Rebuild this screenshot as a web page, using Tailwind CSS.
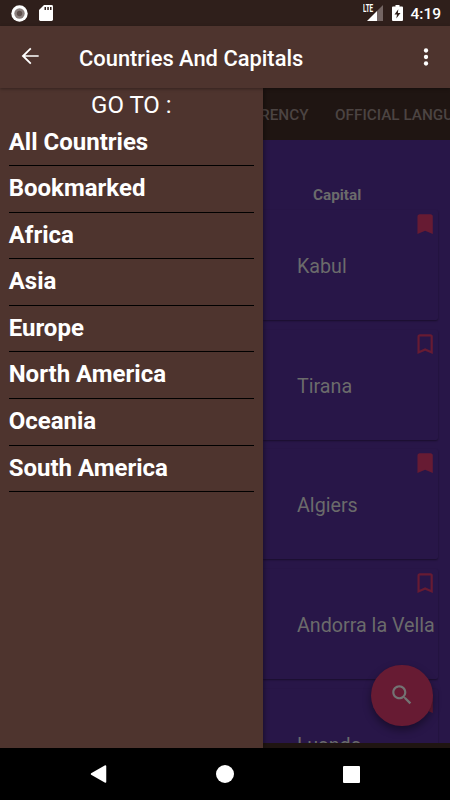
<!DOCTYPE html>
<html lang="en">
<head>
<meta charset="utf-8">
<title>Countries And Capitals</title>
<script src="https://cdn.jsdelivr.net/npm/@tailwindcss/browser@4"></script>
</head>
<body class="bg-black">
<div class="relative flex h-[800px] w-[450px] flex-col overflow-hidden bg-black font-[Roboto,sans-serif] text-white">
  <!-- Status bar -->
  <div class="flex h-[26px] shrink-0 items-center bg-[#2f1f1b] pr-[9px] pl-[11px]">
    <svg class="size-[17px]" viewBox="0 0 17 17"><circle cx="8.5" cy="8.5" r="8.2" fill="#fff"/><circle cx="8.5" cy="8.5" r="5.2" fill="#8b807e"/><circle cx="8.5" cy="8.5" r="2.7" fill="#5f504d"/></svg>
    <svg class="ml-[11px] h-4 w-3.5" viewBox="0 0 14 16"><path d="M5 0H12.6Q14 0 14 1.4V14.6Q14 16 12.6 16H1.4Q0 16 0 14.6V5Z" fill="#fff"/><path d="M5.5 2H7V5H5.5ZM8.3 2H9.8V5H8.3ZM11 2H12.5V5H11Z" fill="#2f1f1b"/></svg>
    <div class="relative ml-auto h-4 w-[20px]">
      <svg class="absolute inset-0 h-4 w-[20px]" viewBox="0 0 20 16"><path d="M20 0V16H14V6Z" fill="#736563"/><path d="M14 6V16H4Z" fill="#fff"/></svg>
      <span class="absolute top-0 left-0 origin-left scale-x-[0.6] text-[10.5px] leading-[8px] font-bold">LTE</span>
    </div>
    <svg class="ml-[9px] h-4 w-[11px]" viewBox="0 0 11 16"><path d="M3.5 0H7.5V1.6H10Q11 1.6 11 2.6V15Q11 16 10 16H1Q0 16 0 15V2.6Q0 1.6 1 1.6H3.5Z" fill="#fff"/><path d="M6.3 4.2 2.5 9.5H5L4.3 13.6 8.5 8H5.9Z" fill="#2f1f1b"/></svg>
    <span class="ml-[7px] w-[31px] translate-y-px text-right text-[15.5px] leading-[26px] font-medium whitespace-nowrap">4:19</span>
  </div>

  <!-- App bar -->
  <header class="relative z-20 flex h-[61.5px] shrink-0 items-center bg-[#4e342e] pl-[17px] shadow-[0_1px_3px_rgba(0,0,0,0.35)]">
    <svg class="size-[26px] -translate-y-px" viewBox="0 0 24 24" fill="#fff"><path d="M20 11.2H7.6l5.700-5.700L12.200 4.300l-7.900 7.700 7.900 7.700 1.100-1.200L7.600 12.800H20z"/></svg>
    <h1 class="ml-[36px] pt-[4px] text-[21.9px] leading-[26px] font-medium whitespace-nowrap">Countries And Capitals</h1>
    <svg class="mr-[11px] ml-auto size-[26px]" viewBox="0 0 24 24" fill="#fff"><circle cx="12" cy="6" r="2"/><circle cx="12" cy="12" r="2"/><circle cx="12" cy="18" r="2"/></svg>
  </header>

  <div class="flex h-[660.5px] shrink-0">
    <!-- Navigation drawer -->
    <nav class="relative z-10 flex w-[262.5px] shrink-0 flex-col bg-[#4e342e] pr-[8.5px] pl-[8.7px] shadow-[1px_0_5px_rgba(0,0,0,0.4)]">
      <div class="h-[32px] text-center text-[24px] leading-[35px]">GO TO :</div>
      <div class="h-[46.6px] border-b border-black text-[24px] leading-[45px] font-bold">All Countries</div>
      <div class="h-[46.6px] border-b border-black text-[24px] leading-[45px] font-bold">Bookmarked</div>
      <div class="h-[46.6px] border-b border-black text-[24px] leading-[45px] font-bold">Africa</div>
      <div class="h-[46.6px] border-b border-black text-[24px] leading-[45px] font-bold">Asia</div>
      <div class="h-[46.6px] border-b border-black text-[24px] leading-[45px] font-bold">Europe</div>
      <div class="h-[46.6px] border-b border-black text-[24px] leading-[45px] font-bold">North America</div>
      <div class="h-[46.6px] border-b border-black text-[24px] leading-[45px] font-bold">Oceania</div>
      <div class="h-[46.6px] border-b border-black text-[24px] leading-[45px] font-bold">South America</div>
    </nav>

    <!-- Dimmed page -->
    <main class="relative flex min-w-0 flex-1 flex-col overflow-hidden bg-[#1f1512]">
      <div class="flex h-[52.5px] shrink-0 items-center pt-[3px] text-[15.3px] font-medium whitespace-nowrap text-[#4c4442]">
        <div class="flex w-[46px] shrink-0 justify-end"><span>CURRENCY</span></div>
        <span class="ml-[26.5px] shrink-0">OFFICIAL LANGUAGE</span>
      </div>
      <div class="flex h-[603px] shrink-0 flex-col overflow-hidden bg-[#281648] text-[#6b6b6b]">
        <div class="h-[70px] shrink-0 pt-[45px] pl-[50.5px] text-[15.3px] leading-5 font-bold">Capital</div>
        <div class="mb-[9.7px] flex h-[110px] w-[175.5px] shrink-0 rounded-r-[2px] shadow-[0_1px_2px_rgba(0,0,0,0.4)]">
          <span class="w-[115px] shrink-0 pl-[34.5px] text-[19.7px] leading-[113.5px] whitespace-nowrap">Kabul</span>
          <svg class="mt-px ml-[34.5px] size-[26.25px] shrink-0" viewBox="0 0 24 24" fill="#671b33"><path d="M17 3H7c-1.100 0-1.990.9-1.990 2L5 21l7-3 7 3V5c0-1.100-.9-2-2-2z"/></svg>
        </div>
        <div class="mb-[9.7px] flex h-[110px] w-[175.5px] shrink-0 rounded-r-[2px] shadow-[0_1px_2px_rgba(0,0,0,0.4)]">
          <span class="w-[115px] shrink-0 pl-[34.5px] text-[19.7px] leading-[113.5px] whitespace-nowrap">Tirana</span>
          <svg class="mt-px ml-[34.5px] size-[26.25px] shrink-0" viewBox="0 0 24 24" fill="#671b33"><path d="M17 3H7c-1.100 0-1.990.9-1.990 2L5 21l7-3 7 3V5c0-1.100-.9-2-2-2zm0 15l-5-2.180L7 18V5h10v13z"/></svg>
        </div>
        <div class="mb-[9.7px] flex h-[110px] w-[175.5px] shrink-0 rounded-r-[2px] shadow-[0_1px_2px_rgba(0,0,0,0.4)]">
          <span class="w-[115px] shrink-0 pl-[34.5px] text-[19.7px] leading-[114.5px] whitespace-nowrap">Algiers</span>
          <svg class="mt-px ml-[34.5px] size-[26.25px] shrink-0" viewBox="0 0 24 24" fill="#671b33"><path d="M17 3H7c-1.100 0-1.990.9-1.990 2L5 21l7-3 7 3V5c0-1.100-.9-2-2-2z"/></svg>
        </div>
        <div class="mb-[9.7px] flex h-[110px] w-[175.5px] shrink-0 rounded-r-[2px] shadow-[0_1px_2px_rgba(0,0,0,0.4)]">
          <span class="w-[115px] shrink-0 pl-[34.5px] text-[19.7px] leading-[114.5px] whitespace-nowrap">Andorra la Vella</span>
          <svg class="mt-px ml-[34.5px] size-[26.25px] shrink-0" viewBox="0 0 24 24" fill="#671b33"><path d="M17 3H7c-1.100 0-1.990.9-1.990 2L5 21l7-3 7 3V5c0-1.100-.9-2-2-2zm0 15l-5-2.180L7 18V5h10v13z"/></svg>
        </div>
        <div class="flex h-[110px] w-[175.5px] shrink-0 rounded-r-[2px] shadow-[0_1px_2px_rgba(0,0,0,0.4)]">
          <span class="w-[115px] shrink-0 pl-[34.5px] text-[19.7px] leading-[113.5px] whitespace-nowrap">Luanda</span>
          <svg class="mt-px ml-[34.5px] size-[26.25px] shrink-0" viewBox="0 0 24 24" fill="#671b33"><path d="M17 3H7c-1.100 0-1.990.9-1.990 2L5 21l7-3 7 3V5c0-1.100-.9-2-2-2z"/></svg>
        </div>
      </div>
      <!-- Search button -->
      <button class="absolute right-[17.5px] bottom-[22px] flex size-[61.5px] items-center justify-center rounded-full bg-[#671b33] shadow-[0_4px_8px_rgba(0,0,0,0.4)]">
        <svg class="size-[26px]" viewBox="0 0 24 24" fill="#737373"><path d="M15.500 14h-.79l-.28-.27C15.410 12.590 16 11.110 16 9.500 16 5.910 13.090 3 9.500 3S3 5.910 3 9.500 5.910 16 9.500 16c1.610 0 3.090-.59 4.230-1.570l.27.28v.79l5 4.990L20.490 19l-4.990-5zm-6 0C7.010 14 5 11.990 5 9.500S7.010 5 9.500 5 14 7.010 14 9.500 11.990 14 9.500 14z"/></svg>
      </button>
    </main>
  </div>

  <!-- System navigation -->
  <div class="flex h-[52px] shrink-0 items-center justify-between bg-black pr-[90px] pl-[90px]">
    <svg class="h-[18px] w-[17px]" viewBox="0 0 17 18"><path d="M15.500 1V17L1.500 9Z" fill="#fff" stroke="#fff" stroke-width="1.500" stroke-linejoin="round"/></svg>
    <div class="size-[18px] rounded-full bg-white"></div>
    <div class="size-[17px] rounded-[1px] bg-white"></div>
  </div>
</div>
</body>
</html>
